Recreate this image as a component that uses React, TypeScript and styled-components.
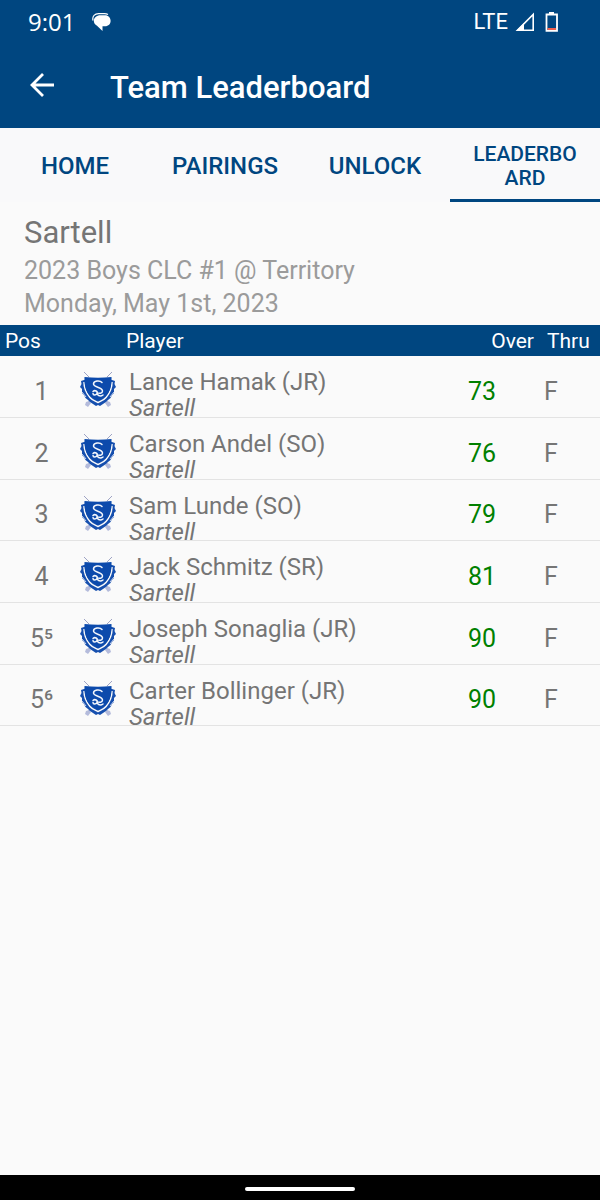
import React from "react";
import styled, { createGlobalStyle } from "styled-components";

const NAVY = "#004680";

const GlobalStyle = createGlobalStyle`
  *, *::before, *::after { box-sizing: border-box; }
  body {
    margin: 0;
    background: #fafafa;
    color: #757575;
    font-family: Roboto, "Liberation Sans", sans-serif;
  }
`;

const Screen = styled.div`
  display: flex;
  flex-direction: column;
  min-height: 100vh;
`;

const TopArea = styled.header`
  background: ${NAVY};
  color: #fff;
`;

const StatusBar = styled.div`
  display: flex;
  align-items: center;
  justify-content: space-between;
  height: 44px;
  padding: 0 38px 0 28px;
`;

const StatusGroup = styled.div<{ $gap: number }>`
  display: flex;
  align-items: center;
  gap: ${(p) => p.$gap}px;
`;

const Clock = styled.span`
  font: 500 24px/28px "Open Sans", Roboto, sans-serif;
`;

const Network = styled.span`
  font: 400 22px/28px Roboto, sans-serif;
`;

const AppBar = styled.div`
  display: flex;
  align-items: center;
  gap: 48px;
  height: 84px;
  padding: 0 22px 2px;
`;

const BackButton = styled.button`
  display: flex;
  align-items: center;
  justify-content: center;
  width: 40px;
  height: 40px;
  padding: 0;
  border: 0;
  background: none;
  color: inherit;
  cursor: pointer;
`;

const Title = styled.h1`
  margin: 0;
  padding-top: 6px;
  font-size: 31px;
  line-height: 36px;
  font-weight: 500;
`;

const Tabs = styled.nav`
  display: grid;
  grid-template-columns: repeat(4, minmax(0, 1fr));
  height: 74px;
  background: #f9f9fa;
`;

const Tab = styled.a<{ $active?: boolean }>`
  display: flex;
  align-items: center;
  justify-content: center;
  padding: 5px 20px 0;
  border-bottom: 3px solid ${(p) => (p.$active ? NAVY : "transparent")};
  color: ${NAVY};
  font-size: ${(p) => (p.$active ? 21 : 24)}px;
  line-height: 24px;
  font-weight: 500;
  text-align: center;
  text-decoration: none;
  text-transform: uppercase;
`;

const TabLabel = styled.span<{ $wrap?: boolean }>`
  min-width: 0;
  word-break: ${(p) => (p.$wrap ? "break-all" : "normal")};
`;

const Summary = styled.section`
  padding: 11px 24px 5px;
`;

const Team = styled.h2`
  margin: 0 0 1px;
  font-size: 31px;
  line-height: 40px;
  font-weight: 400;
`;

const Detail = styled.p`
  margin: 0;
  color: #9b9b9b;
  font-size: 25px;
  line-height: 33px;
`;

const Board = styled.table`
  width: 100%;
  table-layout: fixed;
  border-collapse: collapse;
`;

const Col = styled.col<{ $width?: number }>`
  width: ${(p) => (p.$width ? `${p.$width}px` : "auto")};
`;

const HeadRow = styled.tr`
  height: 31px;
  background: ${NAVY};
  color: #fff;
`;

const HeadCell = styled.th<{ $align?: string; $pad?: string }>`
  padding: ${(p) => p.$pad ?? "0"};
  font-size: 21px;
  line-height: 30px;
  font-weight: 400;
  text-align: ${(p) => p.$align ?? "left"};
`;

const Row = styled.tr`
  height: 62px;
  box-shadow: inset 0 -1px #e3e3e3;

  &:nth-child(3n) {
    height: 61px;
  }
`;

const Cell = styled.td<{ $align?: string; $pad?: string }>`
  padding: ${(p) => p.$pad ?? "0"};
  font-size: 25px;
  line-height: 26px;
  text-align: ${(p) => p.$align ?? "left"};
  vertical-align: middle;
  white-space: nowrap;
`;

const PositionCell = styled(Cell)`
  padding: 9px 0 0 4px;
  text-align: center;
`;

const ScoreCell = styled(Cell)`
  padding: 9px 0 0 7px;
  color: #008000;
`;

const PlayerCell = styled(Cell)`
  padding: 13px 0 0 3px;
  font-size: 24px;
  vertical-align: top;
`;

const PlayerName = styled.div``;

const School = styled.div`
  height: 22px;
  font-style: italic;
`;

const Crest = styled.svg`
  display: block;
  width: 36px;
  height: 36px;
`;

const GestureBar = styled.footer`
  display: flex;
  align-items: center;
  justify-content: center;
  height: 25px;
  margin-top: auto;
  background: #000;
`;

const GestureHandle = styled.div`
  width: 110px;
  height: 4px;
  margin-top: 2px;
  border-radius: 2px;
  background: #fff;
`;

const tabs = ["Home", "Pairings", "Unlock", "Leaderboard"];

const players = [
  { pos: "1", name: "Lance Hamak (JR)", score: 73 },
  { pos: "2", name: "Carson Andel (SO)", score: 76 },
  { pos: "3", name: "Sam Lunde (SO)", score: 79 },
  { pos: "4", name: "Jack Schmitz (SR)", score: 81 },
  { pos: "5⁵", name: "Joseph Sonaglia (JR)", score: 90 },
  { pos: "5⁶", name: "Carter Bollinger (JR)", score: 90 },
];

function SchoolCrest() {
  return (
    <Crest viewBox="0 0 36 36" role="img" aria-label="Sartell crest">
      <path d="M4 0 L9 5 M32 0 L27 5 M10 28 L7 32 M26 28 L29 32" stroke="#9ea3c4" strokeWidth="1" fill="none" />
      <path d="M6 30 L9 29 11 31 8 35 5 33Z M30 30 L27 29 25 31 28 35 31 33Z" fill="#b4bbdb" />
      <path
        d="M4 8 L1 9 1.500 12 0 15 2 17 2 21 4 23 5.500 26 8 28 10 30 13 32 16 34 18 33 20 34 23 32 26 30 28 28 30.500 26 32 23 34 21 34 17 36 15 34.500 12 35 9 32 8Z"
        fill="#164fae"
      />
      <path d="M4 10 C4 18 7 22 10 25.500 C12 28 15 29 18 30.500 C21 29 24 28 26 25.500 C29 22 32 18 32 10" fill="none" stroke="#fafafa" strokeWidth="1.500" />
      <path d="M4.500 5 Q18 6.500 31.500 5 C32 13 30 20 26 24 L18 29 L10 24 C6 20 4 13 4.500 5Z" fill="#0c4aac" />
      <path d="M2 20 L6 25 M34 20 L30 25" fill="none" stroke="#c9d4ed" strokeWidth="1" />
      <path
        d="M22 10.500 C20 8 13.500 8.500 13.500 12 C13.500 15.500 22.500 15 22.500 19 C22.500 21.500 19 22 17 20.500 M13 19.500 C15 17.500 18 19.500 17 21.500 C16 23.500 13 23.500 13 21.500 M17 22 C19 24.500 21 24.500 23 23"
        fill="none"
        stroke="#f3f6fc"
        strokeWidth="1.500"
        strokeLinecap="round"
      />
    </Crest>
  );
}

export default function App() {
  return (
    <Screen>
      <GlobalStyle />
      <TopArea>
        <StatusBar>
          <StatusGroup $gap={17}>
            <Clock>9:01</Clock>
            <svg width="20" height="20" viewBox="0 0 20 20" aria-hidden="true">
              <path d="M1 8.500 C0 4 3 1.600 6.500 1.600 H12.500 Q14.500 1.600 16 2.600" fill="none" stroke="#fff" strokeWidth="1.200" />
              <path d="M8.500 3.200 H13 C16.500 3.200 18.600 5.800 18.600 8.800 C18.600 12 16.500 14.300 13 14.300 L10.500 14.300 V19 L5 13.800 C3 12.800 1.800 11 1.800 8.800 C1.800 5.800 4.500 3.200 8.500 3.200Z" fill="#fff" />
            </svg>
          </StatusGroup>
          <StatusGroup $gap={7}>
            <Network>LTE</Network>
            <svg width="20" height="20" viewBox="0 0 20 20" aria-hidden="true">
              <path d="M18.200 2.500 V18.200 H2.500Z" fill="none" stroke="#fff" strokeWidth="1.600" />
              <path d="M9 11 V18.500 H1.500Z" fill="#fff" />
            </svg>
            <svg width="20" height="20" viewBox="0 0 20 20" aria-hidden="true">
              <path d="M7 0 H12 V3 H7Z" fill="#fff" />
              <path d="M4.500 2.500 H15 V18.800 H4.500Z" fill="none" stroke="#fff" strokeWidth="1.800" />
              <path d="M5.500 16 H14 V18 H5.500Z" fill="#f0604d" />
            </svg>
          </StatusGroup>
        </StatusBar>
        <AppBar>
          <BackButton type="button" aria-label="Back">
            <svg width="26" height="26" viewBox="0 0 26 26" fill="none" stroke="currentColor" strokeWidth="2.800">
              <path d="M14 2 L3 13 14 24 M3 13 H25" />
            </svg>
          </BackButton>
          <Title>Team Leaderboard</Title>
        </AppBar>
      </TopArea>

      <Tabs aria-label="Sections">
        {tabs.map((label) => {
          const active = label === "Leaderboard";
          return (
            <Tab key={label} href={`#${label.toLowerCase()}`} $active={active} aria-current={active ? "page" : undefined}>
              <TabLabel $wrap={active}>{label}</TabLabel>
            </Tab>
          );
        })}
      </Tabs>

      <main>
        <Summary>
          <Team>Sartell</Team>
          <Detail>2023 Boys CLC #1 @ Territory</Detail>
          <Detail>Monday, May 1st, 2023</Detail>
        </Summary>

        <Board>
          <colgroup>
            <Col $width={79} />
            <Col $width={47} />
            <Col />
            <Col $width={79} />
            <Col $width={60} />
          </colgroup>
          <thead>
            <HeadRow>
              <HeadCell scope="col" colSpan={2} $pad="0 0 0 5px">Pos</HeadCell>
              <HeadCell scope="col">Player</HeadCell>
              <HeadCell scope="col" $align="right" $pad="0 6px 0 0">Over</HeadCell>
              <HeadCell scope="col" $pad="0 0 0 7px">Thru</HeadCell>
            </HeadRow>
          </thead>
          <tbody>
            {players.map((player) => (
              <Row key={player.name}>
                <PositionCell>{player.pos}</PositionCell>
                <Cell $pad="6px 0 0 1px">
                  <SchoolCrest />
                </Cell>
                <PlayerCell>
                  <PlayerName>{player.name}</PlayerName>
                  <School>Sartell</School>
                </PlayerCell>
                <ScoreCell>{player.score}</ScoreCell>
                <Cell $pad="9px 0 0 4px">F</Cell>
              </Row>
            ))}
          </tbody>
        </Board>
      </main>

      <GestureBar>
        <GestureHandle />
      </GestureBar>
    </Screen>
  );
}
